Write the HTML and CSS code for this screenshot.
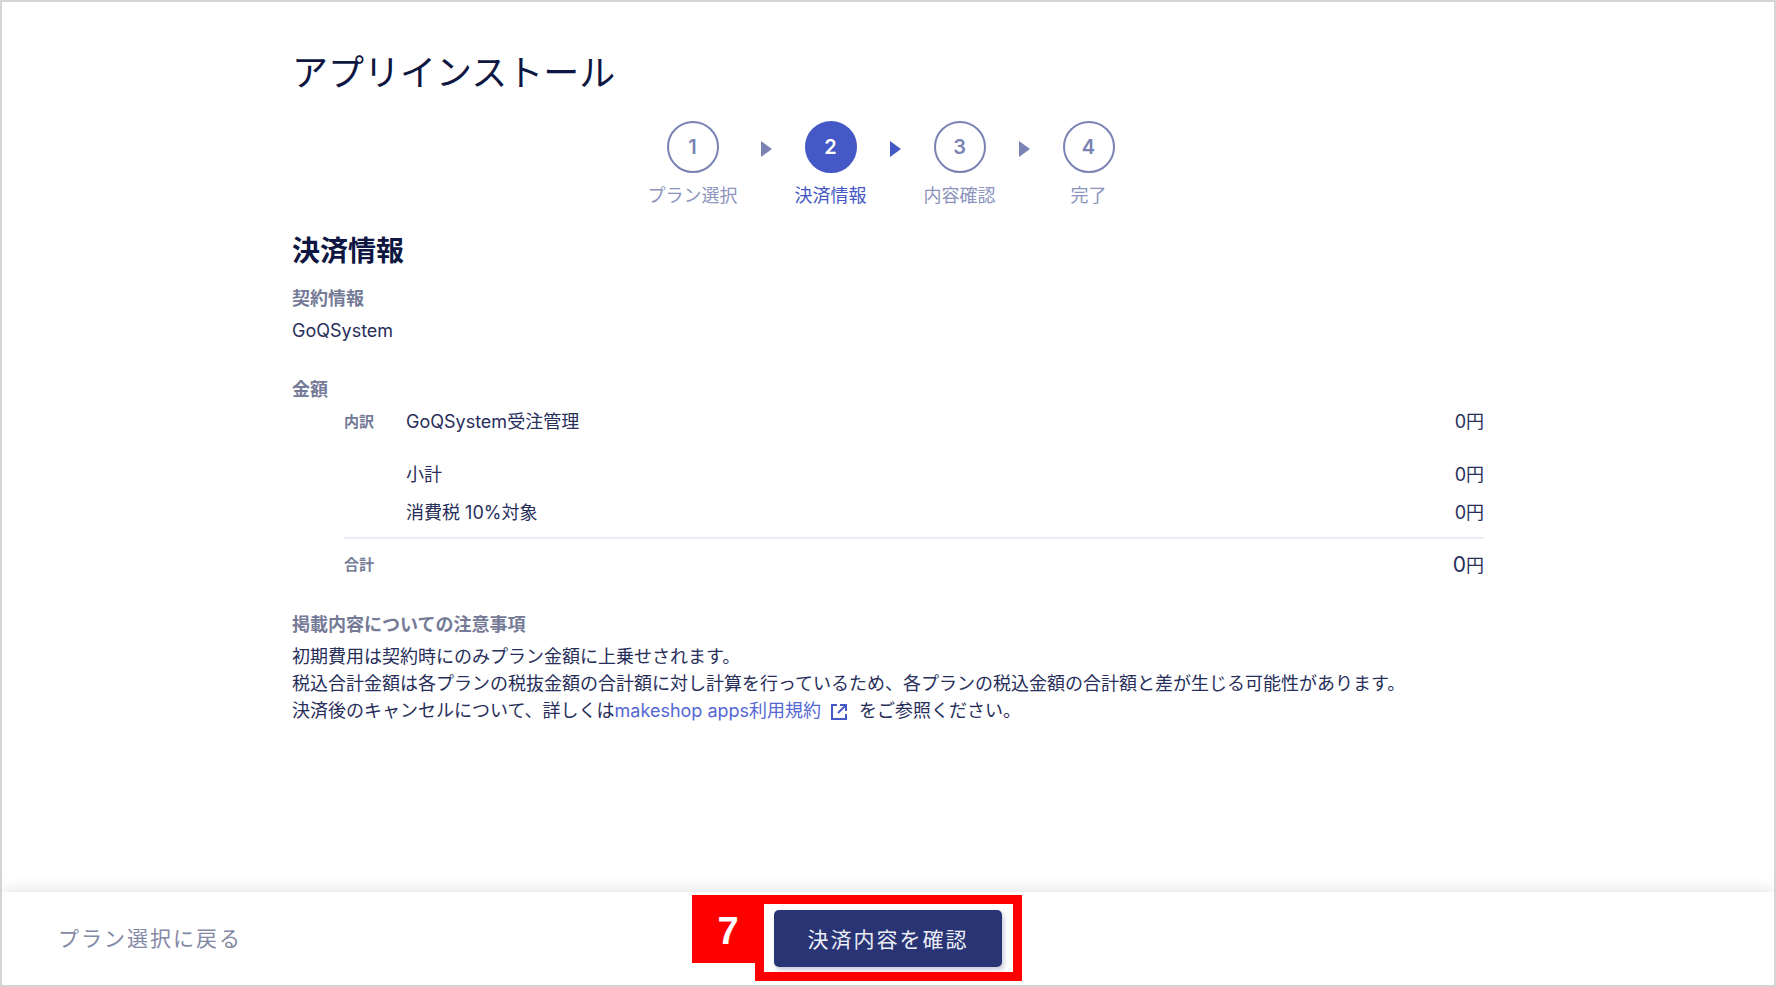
FILE: index.html
```html
<!DOCTYPE html>
<html lang="ja">
<head>
<meta charset="utf-8">
<title>アプリインストール</title>
<link rel="stylesheet" href="styles.css">
</head>
<body>
<div class="page">
  <main class="content">
    <h1 class="title">アプリインストール</h1>

    <ol class="steps">
      <li class="step"><span class="step-number">1</span><span class="step-label">プラン選択</span></li>
      <li class="arrow" aria-hidden="true"></li>
      <li class="step step-current" aria-current="step"><span class="step-number">2</span><span class="step-label">決済情報</span></li>
      <li class="arrow arrow-current" aria-hidden="true"></li>
      <li class="step"><span class="step-number">3</span><span class="step-label">内容確認</span></li>
      <li class="arrow" aria-hidden="true"></li>
      <li class="step"><span class="step-number">4</span><span class="step-label">完了</span></li>
    </ol>

    <h2 class="heading">決済情報</h2>

    <section class="block">
      <h3 class="label">契約情報</h3>
      <p class="text">GoQSystem</p>
    </section>

    <section class="block">
      <h3 class="label">金額</h3>
      <div class="price">
        <table class="price-table">
          <tbody>
            <tr class="row-item"><th scope="row">内訳</th><td>GoQSystem受注管理</td><td class="amount">0円</td></tr>
            <tr class="row-subtotal"><th></th><td>小計</td><td class="amount">0円</td></tr>
            <tr class="row-tax"><th></th><td>消費税 10%対象</td><td class="amount">0円</td></tr>
          </tbody>
          <tfoot>
            <tr class="row-total"><th scope="row">合計</th><td></td><td class="amount"><span class="total-number">0</span>円</td></tr>
          </tfoot>
        </table>
      </div>
    </section>

    <section class="block">
      <h3 class="label">掲載内容についての注意事項</h3>
      <p class="text">初期費用は契約時にのみプラン金額に上乗せされます。<br>税込合計金額は各プランの税抜金額の合計額に対し計算を行っているため、各プランの税込金額の合計額と差が生じる可能性があります。<br>決済後のキャンセルについて、詳しくは<a class="terms" href="#">makeshop apps利用規約<svg class="external" viewBox="0 0 16 16" aria-hidden="true"><path d="M6 1H1v14h14v-5" fill="none" stroke="currentColor" stroke-width="2"/><path d="M14 2 7 9" fill="none" stroke="currentColor" stroke-width="2"/><path d="M9 0h7v7h-2V2H9z" fill="currentColor"/></svg></a>をご参照ください。</p>
    </section>
  </main>

  <footer class="footer">
    <a class="back" href="#">プラン選択に戻る</a>
    <div class="confirm-wrap">
      <button class="confirm" type="button">決済内容を確認</button>
      <div class="highlight"></div>
      <div class="marker">7</div>
    </div>
  </footer>
</div>
</body>
</html>
```

FILE: styles.css
```css
* {
  box-sizing: border-box;
}

body {
  margin: 0;
  background: #fff;
  color: #272e5a;
  font-family: Inter, "Noto Sans CJK JP", sans-serif;
  font-size: 18px;
  line-height: 27px;
}

h1, h2, h3, p, ol {
  margin: 0;
  padding: 0;
}

.page {
  display: flex;
  flex-direction: column;
  min-height: 100vh;
  border: 2px solid #d4d4d4;
}

.content {
  flex: 1;
  width: 100%;
  max-width: 1192px;
  margin: 0 auto;
  padding: 49px 0;
}

.title {
  color: #0e1642;
  font-size: 36px;
  font-weight: 400;
  line-height: 44px;
}

.steps {
  display: flex;
  justify-content: center;
  gap: 23px;
  margin-top: 26px;
  padding-right: 4px;
  list-style: none;
}

.step {
  display: flex;
  flex-direction: column;
  align-items: center;
  gap: 9px;
  min-width: 72px;
  color: #7a83b3;
}

.step-number {
  display: flex;
  align-items: center;
  justify-content: center;
  width: 52px;
  height: 52px;
  border: 2px solid #7a83b3;
  border-radius: 50%;
  font-size: 20px;
  font-weight: 600;
}

.step-label {
  color: #8c94be;
}

.step-current {
  color: #4458c6;
}

.step-current .step-number {
  border-color: #4458c6;
  background: #4458c6;
  color: #fff;
}

.step-current .step-label {
  color: #4458c6;
}

.arrow {
  height: 16px;
  margin-top: 20px;
  border-top: 8px solid transparent;
  border-bottom: 8px solid transparent;
  border-left: 11px solid #7a83b3;
}

.arrow-current {
  border-left-color: #4458c6;
}

.heading {
  margin-top: 24px;
  color: #0e1642;
  font-size: 28px;
  font-weight: 700;
  line-height: 36px;
}

.block {
  margin-top: 32px;
}

.heading + .block {
  margin-top: 16px;
}

.label {
  margin-bottom: 5px;
  color: #757b97;
  font-size: 18px;
  font-weight: 600;
}

.price {
  padding-left: 52px;
}

.price-table {
  width: 100%;
  border-collapse: collapse;
}

.price-table th {
  width: 62px;
  padding: 0;
  color: #757b97;
  font-size: 15px;
  font-weight: 600;
  text-align: left;
  vertical-align: top;
}

.price-table td {
  padding: 0;
  vertical-align: top;
}

.price-table .amount {
  text-align: right;
}

.price-table .row-item td {
  padding-bottom: 26px;
}

.price-table .row-subtotal td,
.price-table .row-tax td {
  padding-bottom: 11px;
}

.price-table .row-total th,
.price-table .row-total td {
  padding-top: 12px;
  border-top: 2px solid #e9eef5;
}

.total-number {
  font-size: 21px;
}

.terms {
  color: #5567d3;
  text-decoration: none;
}

.external {
  width: 16px;
  height: 16px;
  margin: 0 12px 0 10px;
  color: #4458c6;
  vertical-align: -3px;
}

.footer {
  display: grid;
  grid-template-columns: 1fr auto 1fr;
  align-items: center;
  padding: 18px 56px;
  background: #fff;
  box-shadow: 0 0 16px rgba(0, 0, 0, 0.14);
  clip-path: inset(-20px 0 0 0);
}

.back {
  color: #8388a5;
  font-size: 21px;
  letter-spacing: 2px;
  text-decoration: none;
}

.confirm-wrap {
  position: relative;
}

.confirm {
  display: block;
  width: 228px;
  height: 57px;
  padding: 0 0 2px;
  border: 0;
  border-radius: 5px;
  background: #293475;
  box-shadow: 2px 3px 4px rgba(41, 52, 117, 0.25);
  color: #eceef6;
  font-family: inherit;
  font-size: 21px;
  letter-spacing: 2px;
}

.highlight {
  position: absolute;
  inset: -15px -20px -14px -19px;
  border: 9px solid #f00;
  pointer-events: none;
}

.marker {
  position: absolute;
  top: -15px;
  right: 238px;
  width: 72px;
  height: 68px;
  background: #f00;
  color: #fff;
  font-family: "Liberation Sans", Arial, sans-serif;
  font-size: 38px;
  font-weight: 700;
  line-height: 72px;
  text-align: center;
}
```
